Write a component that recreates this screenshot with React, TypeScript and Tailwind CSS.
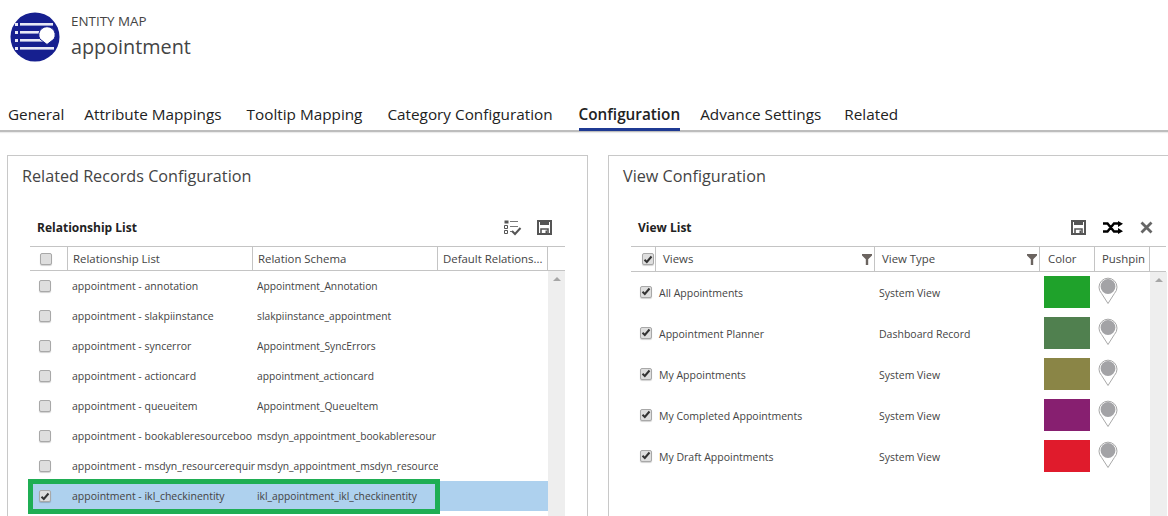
import React from "react";

const font = { fontFamily: '"Open Sans", "Noto Sans", sans-serif' };

function Box({ checked, className = "" }: { checked?: boolean; className?: string }) {
  return (
    <span className={"flex h-[12px] w-[12px] items-center justify-center rounded-[2px] border border-[#a8a8a8] bg-[#dedede] shadow-[0_1px_1px_rgba(0,0,0,0.18)] " + className}>
      {checked && (
        <svg width="10" height="9" viewBox="0 0 10 9">
          <path d="M1.5 4.8 L3.8 7 L8.5 1.5" fill="none" stroke="#333" strokeWidth="2" />
        </svg>
      )}
    </span>
  );
}

function Funnel() {
  return (
    <svg width="10" height="11" viewBox="0 0 10 11" className="shrink-0">
      <path d="M0 0H10V1.5L6.2 5.2V11H3.8V5.2L0 1.5Z" fill="#6b6460" />
    </svg>
  );
}

function Save() {
  return (
    <svg width="15" height="15" viewBox="0 0 15 15">
      <path d="M1 1H14V14H1Z" fill="none" stroke="#555" strokeWidth="2" />
      <path d="M3 1H12V5H3Z" fill="#555" />
      <path d="M4 9H11V14H4Z" fill="none" stroke="#555" strokeWidth="1.6" />
      <path d="M8.5 10.5H10V13H8.5Z" fill="#555" />
    </svg>
  );
}

function ListCheck() {
  return (
    <svg width="18" height="16" viewBox="0 0 18 16">
      <path d="M0.5 0.5H4.5V3.5H0.5Z" fill="#555" />
      <path d="M0.5 5.5H3.5V8.5H0.5Z M0.5 10.5H3.5V13.5H0.5Z" fill="none" stroke="#555" />
      <path d="M6 1.5H14M6 6.5H14M6 11.5H8.5" fill="none" stroke="#777" />
      <path d="M8 11L11 14L16.5 8" fill="none" stroke="#555" strokeWidth="2" />
    </svg>
  );
}

function Shuffle() {
  return (
    <svg width="20" height="13" viewBox="0 0 20 13">
      <path d="M0 2.5H4.5L11 10.5H16M0 10.5H4.5L11 2.5H16" fill="none" stroke="#000" strokeWidth="2.4" />
      <path d="M15 0L20 2.8L15 6Z M15 7L20 10.2L15 13Z" fill="#000" />
    </svg>
  );
}

function Close() {
  return (
    <svg width="13" height="13" viewBox="0 0 13 13">
      <path d="M1.5 1.5L11.5 11.5M11.5 1.5L1.5 11.5" fill="none" stroke="#666" strokeWidth="2.8" />
    </svg>
  );
}

function Pin() {
  return (
    <svg width="20" height="27" viewBox="0 0 20 27">
      <path d="M10 26.5L3.6 16.5A9 9 0 1 1 16.4 16.5Z" fill="#fff" stroke="#a8a8a8" strokeWidth="1" />
      <circle cx="10" cy="9.5" r="7.4" fill="#a3a3a6" />
    </svg>
  );
}

function Logo() {
  return (
    <svg width="50" height="50" viewBox="0 0 50 50" className="shrink-0">
      <circle cx="25" cy="25" r="24.5" fill="#161f8f" />
      <g fill="#e8e9f5">
        <rect x="5" y="11" width="3" height="3" />
        <rect x="5" y="19" width="3" height="3" />
        <rect x="5" y="27" width="3" height="3" />
        <rect x="5" y="35" width="3" height="3" />
        <rect x="10" y="11" width="33" height="2.6" />
        <rect x="10" y="19" width="26" height="2.6" />
        <rect x="10" y="27" width="26" height="2.6" />
        <rect x="10" y="35" width="34" height="2.6" />
      </g>
      <path d="M37 32.5L29.9 27A8.2 8.2 0 1 1 44.1 27Z" fill="#fff" stroke="#161f8f" strokeWidth="1" />
    </svg>
  );
}

const relationships = [
  ["appointment - annotation", "Appointment_Annotation"],
  ["appointment - slakpiinstance", "slakpiinstance_appointment"],
  ["appointment - syncerror", "Appointment_SyncErrors"],
  ["appointment - actioncard", "appointment_actioncard"],
  ["appointment - queueitem", "Appointment_QueueItem"],
  ["appointment - bookableresourceboo", "msdyn_appointment_bookableresour"],
  ["appointment - msdyn_resourcerequir", "msdyn_appointment_msdyn_resource"],
  ["appointment - ikl_checkinentity", "ikl_appointment_ikl_checkinentity"],
];

const views = [
  ["All Appointments", "System View", "#1fa22b"],
  ["Appointment Planner", "Dashboard Record", "#50804f"],
  ["My Appointments", "System View", "#8a8546"],
  ["My Completed Appointments", "System View", "#871f70"],
  ["My Draft Appointments", "System View", "#e01b2c"],
];

const tabs = [
  { t: "General", c: "ml-0" },
  { t: "Attribute Mappings", c: "ml-[20px]" },
  { t: "Tooltip Mapping", c: "ml-[25px]" },
  { t: "Category Configuration", c: "ml-[25px]" },
  { t: "Configuration", c: "ml-[26px]" },
  { t: "Advance Settings", c: "ml-[20px]" },
  { t: "Related", c: "ml-[23px]" },
];

export default function App() {
  return (
    <div style={font} className="h-[516px] w-[1168px] overflow-hidden bg-white text-[#333]">
      <header className="flex h-[100px] items-start gap-[11px] pl-[10px] pt-[12px]">
        <Logo />
        <div className="flex flex-col pt-[1px]">
          <span className="text-[13.4px] leading-[17px] text-[#444]">ENTITY MAP</span>
          <span className="mt-[3px] text-[19.8px] leading-[28px] text-[#444]">appointment</span>
        </div>
      </header>

      <nav className="flex h-[32px] items-stretch border-b-2 border-[#bdbdbd] pl-[8px] shadow-[0_1px_1px_rgba(0,0,0,0.08)]">
        {tabs.map(({ t, c }) => (
          <span
            key={t}
            className={
              "relative whitespace-nowrap text-[15.3px] leading-[28px] text-[#222] " +
              c +
              (t === "Configuration" ? " -mb-[1px] border-b-[3px] border-[#1f3a93] font-semibold" : "")
            }
          >
            {t}
          </span>
        ))}
      </nav>

      <main className="flex items-start pl-[7px] pt-[23px]">
        <section className="h-[400px] w-[581px] shrink-0 border border-[#c8c8c8] pl-[14px] pt-[8px]">
          <h2 className="text-[16.2px] leading-[24px] text-[#444]">Related Records Configuration</h2>
          <div className="ml-[8px] mt-[22px] w-[535px]">
            <div className="flex h-[36px] items-center justify-between pb-[1px] pr-[13px]">
              <span className="pl-[7px] text-[12px] font-bold text-[#222]">Relationship List</span>
              <div className="flex items-center gap-[15px]">
                <ListCheck />
                <Save />
              </div>
            </div>
            <div className="flex h-[25px] border-y border-[#c4c4c4] text-[11.4px] text-[#444]">
              <div className="flex w-[38px] items-center justify-center border-r border-[#c4c4c4] pr-[6px]"><Box /></div>
              <div className="flex w-[185px] items-center border-r border-[#c4c4c4] pl-[5px]">Relationship List</div>
              <div className="flex w-[185px] items-center border-r border-[#c4c4c4] pl-[5px]">Relation Schema</div>
              <div className="flex w-[110px] items-center whitespace-nowrap border-r border-[#c4c4c4] pl-[5px]">Default Relations...</div>
            </div>
            <div className="flex">
              <div className="w-[518px] shrink-0">
                {relationships.map(([a, b], i) => {
                  const selected = i === relationships.length - 1;
                  return (
                    <div key={a} className={"relative flex h-[30px] items-center text-[10.5px] text-[#444] " + (selected ? "bg-[#aed1ee]" : "")}>
                      <div className="flex w-[31px] justify-center pr-[2px]"><Box checked={selected} /></div>
                      <div className="w-[11px]" />
                      <div className="mt-[2px] w-[185px] overflow-hidden whitespace-nowrap">{a}</div>
                      <div className="mt-[2px] w-[181px] overflow-hidden whitespace-nowrap text-[10.25px]">{b}</div>
                      {selected && (
                        <div className="absolute left-[-2px] top-[-2px] h-[35px] w-[412px] border-[5px] border-[#1fae54]" />
                      )}
                    </div>
                  );
                })}
              </div>
              <div className="flex h-[300px] w-[17px] shrink-0 justify-center bg-[#eeeeee] pt-[6px]">
                <span className="h-0 w-0 border-x-[4px] border-b-[4px] border-x-transparent border-b-[#a6a6a6]" />
              </div>
            </div>
          </div>
        </section>

        <section className="ml-[20px] h-[400px] w-[600px] shrink-0 border border-[#c8c8c8] pl-[14px] pt-[8px]">
          <h2 className="text-[16.2px] leading-[24px] text-[#444]">View Configuration</h2>
          <div className="ml-[8px] mt-[22px] w-[535px]">
            <div className="flex h-[36px] items-center justify-between pb-[1px] pr-[13px]">
              <span className="pl-[7px] text-[12px] font-bold text-[#222]">View List</span>
              <div className="flex items-center">
                <Save />
                <span className="ml-[17px]"><Shuffle /></span>
                <span className="ml-[17px]"><Close /></span>
              </div>
            </div>
            <div className="flex h-[26px] border-y border-[#c4c4c4] text-[11.4px] text-[#444]">
              <div className="flex w-[25px] items-center justify-center border-r border-[#c4c4c4] pl-[10px]"><Box checked /></div>
              <div className="flex w-[219px] items-center justify-between border-r border-[#c4c4c4] pl-[7px] pr-[2px]">Views<Funnel /></div>
              <div className="flex w-[165px] items-center justify-between border-r border-[#c4c4c4] pl-[7px] pr-[2px]">View Type<Funnel /></div>
              <div className="flex w-[55px] items-center border-r border-[#c4c4c4] pl-[8px]">Color</div>
              <div className="flex w-[55px] items-center border-r border-[#c4c4c4] pl-[7px]">Pushpin</div>
            </div>
            <div className="flex">
              <div className="w-[519px] shrink-0 pt-[1px]">
                {views.map(([a, b, c]) => (
                  <div key={a} className="flex h-[41px] items-center text-[10.5px] text-[#444]">
                    <div className="flex w-[28px] justify-start pl-[9px]"><Box checked className="-mt-[4px]" /></div>
                    <div className="w-[220px] whitespace-nowrap">{a}</div>
                    <div className="w-[165px] whitespace-nowrap">{b}</div>
                    <div className="-mt-[4px] h-[32px] w-[46px] shrink-0" style={{ backgroundColor: c }} />
                    <div className="ml-[8px] -mt-[6px]"><Pin /></div>
                  </div>
                ))}
              </div>
              <div className="flex h-[300px] w-[17px] shrink-0 justify-center bg-[#eeeeee] pt-[6px]">
                <span className="h-0 w-0 border-x-[4px] border-b-[4px] border-x-transparent border-b-[#a6a6a6]" />
              </div>
            </div>
          </div>
        </section>
      </main>
    </div>
  );
}
